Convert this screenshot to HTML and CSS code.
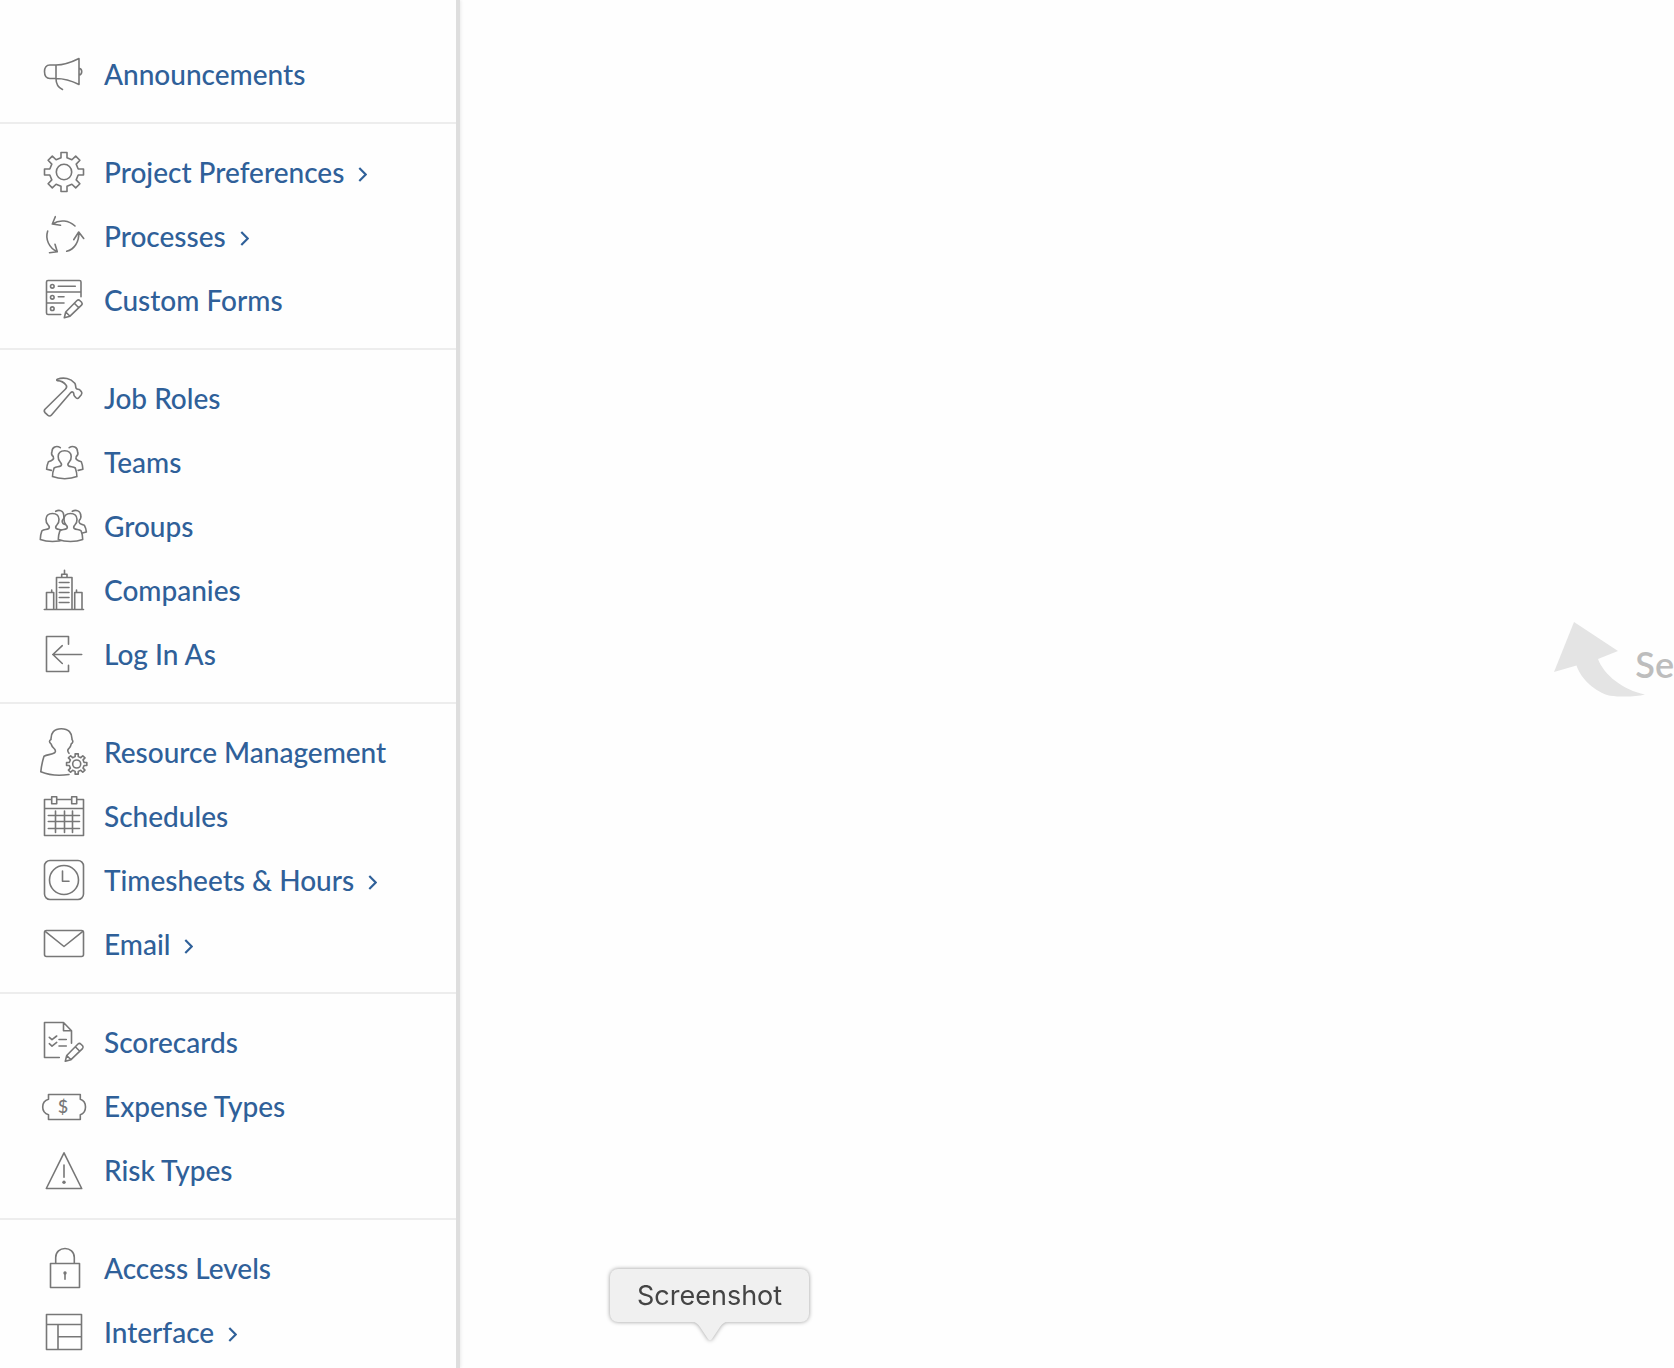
FILE: index.html
```
<!DOCTYPE html>
<html lang="en">
<head>
  <meta charset="UTF-8" />
  <meta name="viewport" content="width=device-width, initial-scale=1" />
  <title>Setup</title>
  <link rel="stylesheet" href="styles.css">
</head>
<body>
<!-- shapes shared by several icons -->
<svg class="shapes" aria-hidden="true">
  <defs>
    <path id="gear" vector-effect="non-scaling-stroke" d="M-3 -14.2V-19.5H3V-14.2L7.9 -12.2L11.7 -15.9L15.9 -11.7L12.2 -7.9L14.2 -3H19.5V3H14.2L12.2 7.9L15.9 11.7L11.7 15.9L7.9 12.2L3 14.2V19.5H-3V14.2L-7.9 12.2L-11.7 15.9L-15.9 11.7L-12.2 7.9L-14.2 3H-19.5V-3H-14.2L-12.2 -7.9L-15.9 -11.7L-11.7 -15.9L-7.9 -12.2Z M7.7 0A7.7 7.7 0 1 1 -7.7 0A7.7 7.7 0 1 1 7.7 0Z" />
    <path id="pencil" d="M24.3 41.7L25.7 36L37 24.5Q38.5 23.2 40 24.7L41.6 26.3Q42.8 27.8 41.5 29.2L30 40.2ZM25.7 36L30 40.2M34.3 27.2L38.8 31.7" />
    <path id="person" d="M21 27.7C22 26.5 21.5 25.5 20.5 24.5C19 23 18 21 18.2 18.5C18.3 14.5 21 12.7 24.7 12.7S31 14.5 31.2 18.5C31.4 21 30.4 23 28.9 24.5C27.9 25.5 27.4 26.5 28.4 27.7C30.5 29 33 28.5 35.3 30C36.2 32.5 37 36 36.9 38.6C33 40.2 29 40.7 24.7 40.7S16.4 40.2 12.5 38.6C12.4 36 13.2 32.5 14.1 30C16.4 28.5 18.9 29 21 27.7Z" />
  </defs>
</svg>

<nav class="sidebar">
  <ul class="menu">
    <li><a href="#">
      <svg class="icon" viewBox="0 0 48 48"><path d="M16 15H10C6 15 4.5 18 4.5 21.5S6 28.5 10 28.5H16ZM16 15C25 15 32 12 39 8.5V34.5C32 31 25 28.5 16 28.5M39 18.3A3.3 3.4 0 0 1 39 25M16 28.5C16 34 18 37.5 22.5 39.5" /></svg>
      Announcements</a></li>
  </ul>
  <ul class="menu">
    <li><a href="#">
      <svg class="icon" viewBox="0 0 48 48"><use href="#gear" transform="translate(24 24)" /></svg>
      Project Preferences <svg class="chevron" viewBox="0 0 8 14"><path d="M1 1L7 7L1 13" /></svg></a></li>
    <li><a href="#">
      <svg class="icon" viewBox="0 0 48 48"><path d="M35 14C29 8.5 20 7 12.5 12M15.3 4.7L12.3 12L20.5 13.3M7.7 19C5 27 9 36 17.3 39.7M9.5 40.7L17.3 39.7L15 32.2M26.7 39.3C34 37.5 39.5 30 38.7 20M33.7 27.7L38.7 20L43.7 26.5" /></svg>
      Processes <svg class="chevron" viewBox="0 0 8 14"><path d="M1 1L7 7L1 13" /></svg></a></li>
    <li><a href="#">
      <svg class="icon" viewBox="0 0 48 48"><path d="M20.7 38.5H8Q6.5 38.5 6.5 37V6Q6.5 4.5 8 4.5H39.5Q41 4.5 41 6V20.7M6.5 16H41M6.5 27H24M18.3 10.3H35.3M18.3 20.7H24" /><circle cx="12.3" cy="10.3" r="1.8" /><circle cx="12.3" cy="21.3" r="1.8" /><circle cx="12.3" cy="32.7" r="1.8" /><use href="#pencil" /></svg>
      Custom Forms</a></li>
  </ul>
  <ul class="menu">
    <li><a href="#">
      <svg class="icon" viewBox="0 0 48 48"><path d="M17.3 5.3C20 4.2 24 3.9 27 4.5C30 5.2 33 7.2 34.8 9.2C36 11 35.3 13 36.3 14.6C37.2 15.8 38.8 14.8 39.9 16L41.3 17.6C42.2 18.8 42.2 19.6 41.3 20.8L39 23.5C38 24.7 37 24.7 36 23.7L34.6 22.2C33.3 20.8 34.3 19.5 33.2 18.4C32.3 17.6 31.6 17.8 30.8 18.6L11.5 40.9C10.3 42.3 9 42.3 7.7 41.2L5 38.6C4 37.5 4 36.4 5 35.3L25.3 15.3C26.8 13.8 27.2 12.5 26 11C24 8.3 21 6.8 17.5 6.6C16.5 6.4 16.4 5.7 17.3 5.3Z" /></svg>
      Job Roles</a></li>
    <li><a href="#">
      <svg class="icon" viewBox="0 0 48 48"><path d="M20.3 9.7C16.5 7.2 12 9 12 13.5C11 15.5 12 17.5 13.3 18.7C14.3 21 12.5 22.5 8.4 23.7C7.4 26 6.7 28.5 6.6 31.3L11.3 32.4M29.2 9.7C33 7.2 37.5 9 37.5 13.5C38.5 15.5 37.5 17.5 36.2 18.7C35.2 21 37 22.5 41.3 23.7C42.3 26 42.8 28.5 42.9 31.3L38.2 32.4" /><use href="#person" /></svg>
      Teams</a></li>
    <li><a href="#">
      <svg class="icon" viewBox="0 0 48 48"><path d="M15.7 9.3C19.5 7.2 23.6 9 23.7 13C24.5 15.2 23.6 17 22.3 18.5C21.5 21 23 22 26.7 22.7M32.3 9.3C36 7.2 40.5 9 40.7 13C41.5 15.2 40.5 17 39.2 18.5C38.3 21 40 22 44.3 23.2C45.5 25.5 46.2 27.5 46.4 30L42.5 31" /><use href="#person" transform="translate(-12.2 -1.2)" /><use class="front" href="#person" transform="translate(5.8 -1.2)" /></svg>
      Groups</a></li>
    <li><a href="#">
      <svg class="icon" viewBox="0 0 48 48"><path d="M4.3 43.5H43.5M16.5 43.5V11.5H32V43.5M21.7 11.5V8.3H27V11.5M24.5 8.3V4.3M19.3 16.5H29M19.3 21.5H29M19.3 26.5H29M19.3 31.5H29M19.3 36.5H29M6.5 43.5V26.5H13.7V43.5M11.7 26.5V24M34.7 43.5V26.5H42V43.5M36.5 26.5V24" /></svg>
      Companies</a></li>
    <li><a href="#">
      <svg class="icon" viewBox="0 0 48 48"><path d="M28.5 14.3V6.5H6.5V41.5H28.5V35.3M41.7 24.5H12.7M22.3 15.7L12.9 24.5L22.3 33.5" /></svg>
      Log In As</a></li>
  </ul>
  <ul class="menu">
    <li><a href="#">
      <svg class="icon" viewBox="0 0 48 48"><path d="M29 25.3C27.5 23.5 27.3 22 28.7 20.7C30.3 19 31 17.5 31.3 15.8C33 15 33.3 13 32 11.5C32.3 5 28.5 .7 21.3 .7S10.7 5 11 11.5C9 12.5 9 14.5 11 15.8C11.5 18 12.7 19.5 14.5 21C15.5 22.3 15.4 24 14.7 24.7C11.5 26.7 7.5 26.5 4 28.3C2.5 33 1.3 38.5 .8 43.8C8 46.8 19.5 48 29 46.5" /><use href="#gear" transform="translate(36.7 36) scale(.52)" /></svg>
      Resource Management</a></li>
    <li><a href="#">
      <svg class="icon" viewBox="0 0 48 48"><path d="M11.7 7.5H4.5V43.5H43.5V7.5H36.7M16.7 7.5H31.7M4.5 16.5H43.5M11.7 4.7H16.7V11.7H11.7ZM31.7 4.7H36.7V11.7H31.7ZM15.5 19V40.5M24.5 19V40.5M32.5 19V40.5M8.3 23.5H39.5M8.3 29.5H39.5M8.3 36.5H39.5" /></svg>
      Schedules</a></li>
    <li><a href="#">
      <svg class="icon" viewBox="0 0 48 48"><rect x="4.5" y="4.5" width="39" height="39" rx="5.5" /><circle cx="24" cy="24" r="14.5" /><path d="M22.5 15V25.3H29" /></svg>
      Timesheets &amp; Hours <svg class="chevron" viewBox="0 0 8 14"><path d="M1 1L7 7L1 13" /></svg></a></li>
    <li><a href="#">
      <svg class="icon" viewBox="0 0 48 48"><rect x="4.5" y="10.5" width="39" height="26" rx="2" /><path d="M5.2 11.3L24 26.5L42.8 11.3" /></svg>
      Email <svg class="chevron" viewBox="0 0 8 14"><path d="M1 1L7 7L1 13" /></svg></a></li>
  </ul>
  <ul class="menu">
    <li><a href="#">
      <svg class="icon" viewBox="0 0 48 48"><path d="M19.3 39.5H4.5V4.5H23.5L31.5 12.7V25.3M23.5 4.5V12.7H31.5M9.3 19.3L12 21.7L16.7 18M19 21.5H26.3M9.3 25.7L12 28.1L16.7 24.4M19 28H26.3" /><use href="#pencil" transform="translate(1 1.5)" /></svg>
      Scorecards</a></li>
    <li><a href="#">
      <svg class="icon" viewBox="0 0 48 48"><path d="M8.5 12.5H40.3V17.3C43.5 18.3 45.5 21.5 45.5 25S43.5 31.7 40.3 32.7V37.5H8.5V32.7C5 31.7 2.7 28.5 2.7 25S5 18.3 8.5 17.3Z" /><text class="dollar" x="23" y="31">$</text></svg>
      Expense Types</a></li>
    <li><a href="#">
      <svg class="icon" viewBox="0 0 48 48"><path d="M24 6.8L41.7 42.5H6.3ZM24 19V31.3" /><circle class="dot" cx="24" cy="36.3" r="1.7" /></svg>
      Risk Types</a></li>
  </ul>
  <ul class="menu">
    <li><a href="#">
      <svg class="icon" viewBox="0 0 48 48"><path d="M10.5 19.5H39.5V43.5H10.5ZM15.7 19.5V13.5C15.7 8 20 4.5 25 4.5S34.3 8 34.3 13.5V19.5M25 28.5V35.3" /><circle class="dot" cx="25" cy="29" r="1.7" /></svg>
      Access Levels</a></li>
    <li><a href="#">
      <svg class="icon" viewBox="0 0 48 48"><path d="M6.5 6.5H41.5V41.5H6.5ZM6.5 16.5H41.5M18 16.5V41.5M18 28.8H41.5" /></svg>
      Interface <svg class="chevron" viewBox="0 0 8 14"><path d="M1 1L7 7L1 13" /></svg></a></li>
  </ul>
</nav>

<main class="content">
  <div class="hint">
    <svg class="hint-arrow" viewBox="0 0 92 76"><path d="M21 1L65 30L45 38C51 54 70 69 92 73.5C82 76 68 76 57 74.7C42 71 28 58 23.5 44.5L1 51Z" /></svg>
    <span class="hint-text">Se</span>
  </div>
</main>

<div class="tooltip" role="tooltip">Screenshot
  <svg class="tooltip-tail" viewBox="0 0 36 20"><path d="M0 0C4 0 6 2 8 5L16 17Q18 19.5 20 17L28 5C30 2 32 0 36 0" /></svg>
</div>
</body>
</html>
```
FILE: styles.css
```
* {
  box-sizing: border-box;
}
body {
  margin: 0;
  min-height: 100vh;
  display: flex;
  position: relative;
  overflow-x: hidden;
  background: #fefefe;
  font-family: Lato, "Open Sans", sans-serif;
}
.shapes {
  position: absolute;
  width: 0;
  height: 0;
}

/* Sidebar */
.sidebar {
  flex: none;
  width: 460px;
  padding-top: 26px;
  border-right: 4px solid #dedede;
  box-shadow: 1px 0 3px rgba(0, 0, 0, 0.08);
}
.menu {
  list-style: none;
  margin: 0;
  padding: 16px 40px;
  border-bottom: 2px solid #ededed;
}
.menu:last-child {
  padding-bottom: 0;
  border-bottom: none;
}
.menu a {
  display: flex;
  align-items: center;
  gap: 16px;
  height: 64px;
  color: #2f6099;
  font-size: 28px;
  font-weight: 500;
  text-decoration: none;
  white-space: nowrap;
}
.menu a:hover {
  text-decoration: underline;
}
.icon {
  flex: none;
  width: 48px;
  height: 48px;
  overflow: visible;
  fill: none;
  stroke: #777;
  stroke-width: 1.6;
  stroke-linecap: round;
  stroke-linejoin: round;
}
.icon .front {
  fill: #fefefe;
}
.icon .dot {
  fill: #777;
  stroke: none;
}
.icon .dollar {
  fill: #777;
  stroke: none;
  font-size: 18px;
  text-anchor: middle;
}
.chevron {
  width: 9px;
  height: 15px;
  margin-top: 4px;
  margin-left: -2px;
  fill: none;
  stroke: #2f6099;
  stroke-width: 2;
}

/* Content */
.content {
  flex: 1;
  min-width: 0;
  display: flex;
  align-items: center;
  justify-content: flex-end;
  padding-bottom: 50px;
  overflow: hidden;
}
.hint {
  display: flex;
  align-items: center;
  color: #bdbdbd;
  font-size: 36px;
  font-weight: 600;
}
.hint-arrow {
  width: 92px;
  height: 76px;
  fill: #e4e4e4;
}
.hint-text {
  margin-left: -10px;
  padding-top: 10px;
}

/* Tooltip */
.tooltip {
  position: absolute;
  left: 610px;
  bottom: 46px;
  padding: 0 27px;
  border-radius: 8px;
  background: #f0f0f0;
  color: #444;
  font-family: Inter, sans-serif;
  font-size: 27px;
  line-height: 53px;
  filter: drop-shadow(0 0 2px rgba(0, 0, 0, 0.4));
}
.tooltip-tail {
  position: absolute;
  top: 100%;
  left: 50%;
  width: 36px;
  height: 20px;
  margin-left: -18px;
  fill: #f0f0f0;
}
```
